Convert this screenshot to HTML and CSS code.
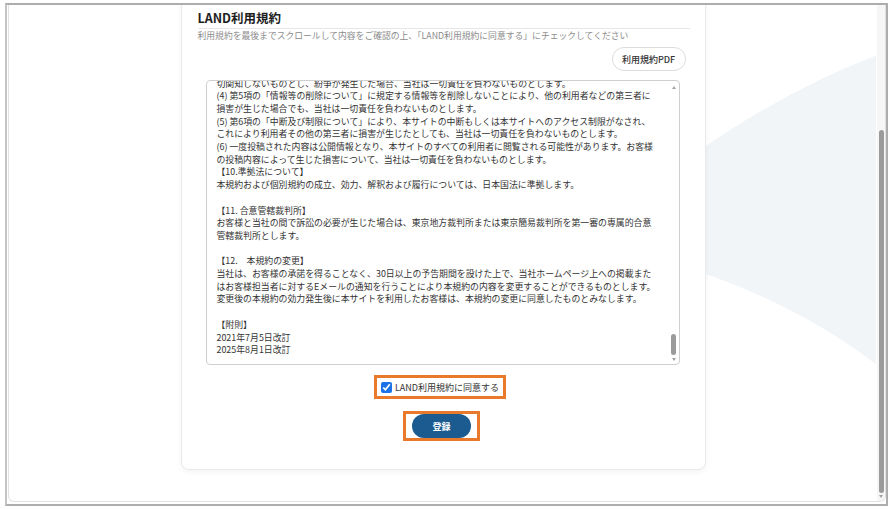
FILE: index.html
```html
<!DOCTYPE html>
<html lang="ja">
<head>
  <meta charset="UTF-8">
  <meta name="viewport" content="width=device-width, initial-scale=1.0">
  <title>LAND利用規約</title>
  <link rel="stylesheet" href="styles.css">
</head>
<body>
  <div class="window">
    <div class="viewport">
      <div class="page">
        <svg class="bg-shape" width="867" height="497" viewBox="9 5 867 497">
          <path d="M 877 55 Q 790 88 700 150 L 700 272 Q 800 306 877 365 Z" fill="#f1f5f8"/>
        </svg>

        <main class="card">
          <h2 class="title">LAND利用規約</h2>
          <p class="lead">利用規約を最後までスクロールして内容をご確認の上、「LAND利用規約に同意する」にチェックしてください</p>

          <div class="pdf-row">
            <button type="button" class="pdf-btn">利用規約PDF</button>
          </div>

          <div class="terms">
            <div class="terms-body">
<p class="terms-text">(3) 本サイトの利用者間において生じた紛争については、当事者間で解決するものとし、当社は一
切関知しないものとし、紛争が発生した場合、当社は一切責任を負わないものとします。
(4) 第5項の「情報等の削除について」に規定する情報等を削除しないことにより、他の利用者などの第三者に
損害が生じた場合でも、当社は一切責任を負わないものとします。
(5) 第6項の「中断及び制限について」により、本サイトの中断もしくは本サイトへのアクセス制限がなされ、
これにより利用者その他の第三者に損害が生じたとしても、当社は一切責任を負わないものとします。
(6) 一度投稿された内容は公開情報となり、本サイトのすべての利用者に閲覧される可能性があります。お客様
の投稿内容によって生じた損害について、当社は一切責任を負わないものとします。
【10.準拠法について】
本規約および個別規約の成立、効力、解釈および履行については、日本国法に準拠します。

【11. 合意管轄裁判所】
お客様と当社の間で訴訟の必要が生じた場合は、東京地方裁判所または東京簡易裁判所を第一審の専属的合意
管轄裁判所とします。

【12.　本規約の変更】
当社は、お客様の承諾を得ることなく、30日以上の予告期間を設けた上で、当社ホームページ上への掲載また
はお客様担当者に対するEメールの通知を行うことにより本規約の内容を変更することができるものとします。
変更後の本規約の効力発生後に本サイトを利用したお客様は、本規約の変更に同意したものとみなします。

【附則】
2021年7月5日改訂
2025年8月1日改訂</p>
            </div>
            <div class="terms-bar">
              <span class="arrow-up"></span>
              <span class="terms-thumb"></span>
              <span class="arrow-down"></span>
            </div>
          </div>

          <div class="agree-row">
            <label class="agree"><input type="checkbox" id="agree" checked> LAND利用規約に同意する</label>
          </div>

          <div class="submit-row">
            <div class="submit-wrap">
              <button type="submit" class="submit">登録</button>
            </div>
          </div>
        </main>
      </div>

      <div class="page-bar">
        <span class="page-thumb"></span>
        <span class="arrow-down"></span>
      </div>
    </div>
  </div>
</body>
</html>
```

FILE: styles.css
```css
* {
  box-sizing: border-box;
}

body {
  margin: 0;
  background: #fff;
  font-family: "Noto Sans CJK JP", "Noto Sans", sans-serif;
  color: #333;
}

/* browser frame */
.window {
  margin: 3px 0 0 5px;
  width: 883px;
  height: 503px;
  border: 2px solid #adadad;
  border-left-color: #c4c4c4;
}

.viewport {
  display: flex;
  height: 497px;
  margin-left: 1px;
  border: 1px solid #e2e2e2;
  border-top: 0;
  border-radius: 0 0 6px 6px;
  overflow: hidden;
}

.page {
  flex: 1;
  position: relative;
  overflow: hidden;
}

.bg-shape {
  position: absolute;
  left: 0;
  top: 0;
}

.page-bar {
  width: 8px;
  background: #f6f6f6;
  display: flex;
  flex-direction: column;
  align-items: center;
  justify-content: flex-end;
  padding-bottom: 3px;
}

.page-thumb {
  width: 5px;
  height: 363px;
  border-radius: 3px;
  background: #9b9b9b;
  margin-bottom: 2px;
}

/* card */
.card {
  position: relative;
  z-index: 1;
  width: 525px;
  margin: -20px auto 0;
  padding: 22px 0 28px;
  background: #fff;
  border: 1px solid #e9e9e9;
  border-radius: 8px;
  box-shadow: 0 2px 6px rgba(0, 0, 0, 0.05);
}

.title {
  margin: 0 15px 0 16px;
  font-size: 12.5px;
  font-weight: bold;
  line-height: 20px;
  color: #1e1e1e;
  border-bottom: 1px solid #e6e6e6;
}

.lead {
  margin: 1px 0 0 16px;
  font-size: 8.8px;
  line-height: 12px;
  color: #8c8c8c;
}

.pdf-row {
  display: flex;
  justify-content: flex-end;
  margin-top: 5px;
  padding-right: 19px;
}

.pdf-btn {
  width: 74px;
  height: 24px;
  padding: 0;
  border: 1px solid #dcdcdc;
  border-radius: 12px;
  background: #fff;
  font-family: inherit;
  font-size: 9px;
  font-weight: 500;
  color: #333;
}

/* terms box */
.terms {
  position: relative;
  width: 474px;
  height: 285px;
  margin: 9px 0 0 24px;
  border: 1px solid #cfcfcf;
  border-radius: 4px;
}

.terms-body {
  height: 100%;
  overflow: hidden;
  display: flex;
  flex-direction: column;
  justify-content: flex-end;
  padding: 0 20px 7px 10px;
}

.terms-text {
  margin: 0;
  font-size: 8.9px;
  line-height: 12.7px;
  white-space: pre;
  color: #333;
}

.terms-bar {
  position: absolute;
  top: 3px;
  right: 2px;
  bottom: 3px;
  width: 6px;
  display: flex;
  flex-direction: column;
  align-items: center;
}

.terms-thumb {
  width: 5px;
  height: 21px;
  margin-top: auto;
  margin-bottom: 3px;
  border-radius: 3px;
  background: #9b9b9b;
}

.arrow-up,
.arrow-down {
  width: 0;
  height: 0;
  border-left: 2.5px solid transparent;
  border-right: 2.5px solid transparent;
}

.arrow-up {
  margin-top: 2px;
  border-bottom: 3px solid #a3a3a3;
}

.arrow-down {
  border-top: 3px solid #a3a3a3;
}

/* agree + submit */
.agree-row,
.submit-row {
  display: flex;
  justify-content: center;
}

.agree-row {
  margin-top: 10px;
  padding-right: 6px;
}

.agree {
  display: inline-flex;
  align-items: center;
  gap: 3px;
  height: 24px;
  padding: 0 4px 0 4px;
  border: 3px solid #e9792b;
  font-size: 9px;
  color: #333;
}

.agree input {
  width: 11px;
  height: 11px;
  margin: 0;
  accent-color: #1a73e8;
}

.submit-row {
  margin-top: 12px;
  padding-right: 3px;
}

.submit-wrap {
  display: inline-flex;
  align-items: center;
  height: 30px;
  padding: 0 6px;
  border: 3px solid #e9792b;
}

.submit {
  width: 59px;
  height: 24px;
  border: none;
  border-radius: 12px;
  background: #1c5b90;
  color: #fff;
  font-family: inherit;
  font-size: 9px;
  font-weight: bold;
}
```
